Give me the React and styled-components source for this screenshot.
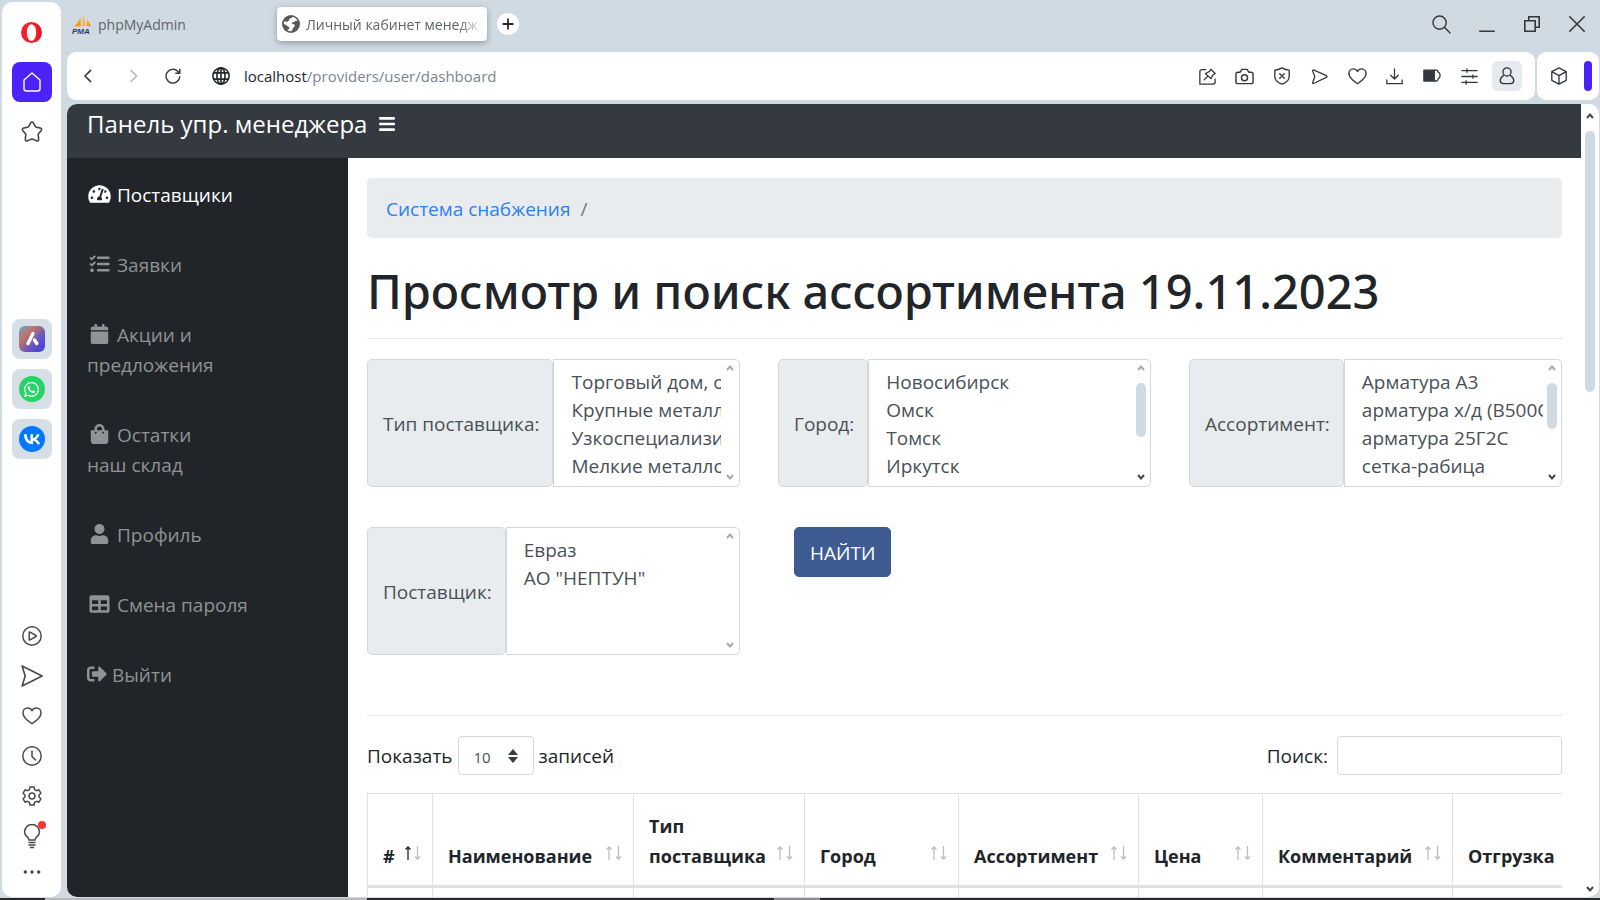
import styled, { createGlobalStyle } from 'styled-components';
import {
  FaBars,
  FaCalendar,
  FaShoppingBag,
  FaSignOutAlt,
  FaTable,
  FaTachometerAlt,
  FaTasks,
  FaUser,
  FaWhatsapp,
} from 'react-icons/fa';

const GlobalStyle = createGlobalStyle`
  * { box-sizing: border-box; }

  body {
    margin: 0;
    font-family: 'Open Sans', 'Noto Sans', sans-serif;
    font-size: 19px;
    line-height: 30px;
    color: #212529;
    overflow: hidden;
  }

  button, input, select { font-family: inherit; }
  a { text-decoration: none; }
`;

/* ---------- browser window ---------- */

const Desktop = styled.div`
  height: 100vh;
  display: flex;
  flex-direction: column;
  background: #d0dae3;
`;

const Taskbar = styled.div`
  flex: none;
  height: 2px;
  background: linear-gradient(
    90deg,
    #2a2a2e 45px, #b9b9bb 45px, #b9b9bb 367px,
    #2a2a2e 367px, #2a2a2e 774px, #8d8d90 774px,
    #8d8d90 820px, #2a2a2e 820px
  );
`;

const BrowserWindow = styled.div`
  flex: 1;
  min-height: 0;
  display: flex;
  gap: 6px;
  padding: 2px 1px 1px 2px;
`;

const BrowserSidebar = styled.aside`
  flex: none;
  width: 59px;
  display: flex;
  flex-direction: column;
  align-items: center;
  justify-content: space-between;
  padding: 10px 0 1px;
  background: #fff;
  border-radius: 10px;
`;

const SideGroup = styled.div`
  display: flex;
  flex-direction: column;
  align-items: center;
  gap: ${({ $gap }) => $gap || 0}px;
  padding-top: ${({ $top }) => $top || 0}px;
`;

const SideButton = styled.button`
  position: relative;
  display: flex;
  align-items: center;
  justify-content: center;
  width: 40px;
  height: 40px;
  padding: 0;
  border: 0;
  border-radius: 8px;
  color: #454b52;
  background: ${({ $bg }) => $bg || 'none'};
`;

const RedDot = styled.span`
  position: absolute;
  top: 5px;
  right: 6px;
  width: 8px;
  height: 8px;
  border-radius: 50%;
  background: #f8372f;
`;

const AppIcon = styled.span`
  display: flex;
  align-items: center;
  justify-content: center;
  width: 26px;
  height: 26px;
  border-radius: ${({ $round }) => ($round ? '50%' : '6px')};
  background: ${({ $bg }) => $bg};
  color: #fff;
`;

const WindowMain = styled.div`
  flex: 1;
  min-width: 0;
  display: flex;
  flex-direction: column;
`;

const TabStrip = styled.div`
  flex: none;
  display: flex;
  align-items: center;
  height: 50px;
  padding-bottom: 6px;
`;

const Tab = styled.button`
  display: flex;
  align-items: center;
  gap: 6px;
  flex: none;
  width: 210px;
  height: 34px;
  padding: 0 6px 0 5px;
  border: 0;
  border-radius: 4px;
  font-size: 14px;
  color: #5e646a;
  text-align: left;
  white-space: nowrap;
  background: ${({ $active }) => ($active ? '#fff' : 'none')};
  box-shadow: ${({ $active }) => ($active ? '0 2px 6px rgba(60, 75, 90, 0.45)' : 'none')};

  svg { flex: none; }
`;

const TabTitle = styled.span`
  mask-image: linear-gradient(90deg, #000 88%, transparent 104%);
`;

const NewTab = styled.button`
  display: flex;
  align-items: center;
  justify-content: center;
  width: 22px;
  height: 22px;
  margin-left: 10px;
  padding: 0;
  border: 0;
  border-radius: 50%;
  background: #fff;
  color: #23282d;
`;

const WindowControls = styled.div`
  display: flex;
  margin-left: auto;
`;

const WindowButton = styled.button`
  display: flex;
  align-items: center;
  justify-content: center;
  width: 45px;
  height: 40px;
  padding: 0;
  border: 0;
  background: none;
  color: #33383d;
`;

const Toolbar = styled.div`
  flex: none;
  display: flex;
  gap: 2px;
  height: 48px;
  margin-bottom: 4px;
`;

const ToolbarPanel = styled.div`
  display: flex;
  align-items: center;
  flex: ${({ $grow }) => ($grow ? 1 : 'none')};
  gap: 10px;
  padding: ${({ $grow }) => ($grow ? '0 13px 0 7px' : '0 7px')};
  background: #fff;
  border-radius: 9px;
`;

const NavButtons = styled.div`
  display: flex;
  gap: 12px;
`;

const ToolButton = styled.button`
  display: flex;
  align-items: center;
  justify-content: center;
  width: 30px;
  height: 30px;
  padding: 0;
  border: 0;
  border-radius: 6px;
  color: ${({ disabled }) => (disabled ? '#b8bcc0' : '#32383e')};
  background: ${({ $active }) => ($active ? '#e4eaf0' : 'none')};
`;

const Address = styled.div`
  display: flex;
  align-items: center;
  gap: 14px;
  flex: 1;
  padding-left: 14px;
  font-size: 15px;
  color: #7b858e;

  b { font-weight: 400; color: #23282d; }
  svg { color: #23282d; }
`;

const ToolIcons = styled.div`
  display: flex;
  justify-content: space-between;
  width: 330px;
`;

const PurpleBar = styled.span`
  width: 8px;
  height: 30px;
  border-radius: 4px;
  background: #4c22fb;
`;

/* ---------- page ---------- */

const Viewport = styled.div`
  flex: 1;
  min-height: 0;
  display: flex;
  background: #fff;
  border-radius: 10px;
  overflow: hidden;
`;

const Page = styled.div`
  flex: 1;
  min-width: 0;
  display: flex;
  flex-direction: column;
`;

const TopNav = styled.header`
  flex: none;
  display: flex;
  align-items: center;
  gap: 11px;
  height: 54px;
  padding: 0 20px 14px;
  background: #343a40;
`;

const Brand = styled.a`
  font-size: 24px;
  color: #fff;
`;

const MenuButton = styled.button`
  display: flex;
  padding: 0;
  border: 0;
  background: none;
  color: #fff;
  font-size: 18px;
`;

const PageBody = styled.div`
  flex: 1;
  min-height: 0;
  display: flex;
`;

const SideNav = styled.nav`
  flex: none;
  width: 281px;
  padding-top: 2px;
  background: #212529;
`;

const NavItem = styled.a`
  display: block;
  padding: 20px;
  color: ${({ $active }) => ($active ? '#fff' : '#909294')};

  svg {
    width: ${({ $narrow }) => ($narrow ? 20 : 25)}px;
    height: 20px;
    margin-right: 5px;
    vertical-align: -2px;
  }
`;

const Content = styled.main`
  flex: 1;
  min-width: 0;
  padding: 20px 19px 0;
  overflow: hidden;
`;

const Breadcrumb = styled.div`
  display: flex;
  gap: 10px;
  padding: 16px 19px 14px;
  border-radius: 5px;
  background: #e9ecef;
  color: #6c757d;

  a { color: #2a80f5; }
`;

const PageTitle = styled.h1`
  margin: 23px 0 17px;
  font-family: 'Noto Sans', 'Open Sans', sans-serif;
  font-size: 47px;
  line-height: 60px;
  font-weight: 500;
`;

const Divider = styled.hr`
  margin: 0 0 20px;
  border: 0;
  border-top: 1px solid #e5e5e5;
`;

const Filters = styled.form`
  display: grid;
  grid-template-columns: repeat(3, minmax(0, 1fr));
  gap: 40px 38px;
  margin-bottom: 60px;
`;

const InputGroup = styled.div`
  display: flex;
  height: 128px;
`;

const GroupLabel = styled.label`
  flex: none;
  display: flex;
  align-items: center;
  padding: 2px 13px 0 15px;
  border: 1px solid #d3d8dd;
  border-radius: 5px;
  background: #e9ecef;
  color: #495057;
`;

const ListFrame = styled.div`
  flex: 1;
  min-width: 0;
  display: flex;
  padding: 9px 0 5px 15px;
  border: 1px solid #d3d8dd;
  border-radius: 0 5px 5px 0;
`;

const ListSelect = styled.select`
  flex: 1;
  min-width: 0;
  height: 112px;
  padding: 0;
  border: 0;
  outline: 0;
  background: none;
  font-size: 19px;
  color: #495057;
  overflow: hidden;
  scrollbar-width: none;

  option {
    height: 28px;
    padding: 0 2px;
    line-height: 28px;
  }
`;

const ScrollTrack = styled.div`
  flex: none;
  display: flex;
  flex-direction: column;
  align-items: center;
  width: 18px;
  margin: -5px 0 0;
  color: #a6a9ac;

  svg:last-child {
    margin-top: auto;
    color: ${({ $enabled }) => ($enabled ? '#44484c' : '#a6a9ac')};
  }
`;

const ScrollThumb = styled.span`
  width: 10px;
  height: ${({ $size }) => $size}px;
  margin-top: 11px;
  border-radius: 5px;
  background: #d0dae3;
`;

const FindButton = styled.button`
  justify-self: start;
  height: 50px;
  margin-left: 16px;
  padding: 2px 15px 0;
  border: 1px solid #3c5a92;
  border-radius: 5px;
  background: #3f5c92;
  color: #fff;
  font-size: 19px;
`;

const TableTools = styled.div`
  display: flex;
  justify-content: space-between;
  height: 39px;
  margin-bottom: 18px;
`;

const ToolLabel = styled.label`
  display: flex;
  align-items: center;
  gap: ${({ $gap }) => $gap}px;
`;

const LengthBox = styled.span`
  position: relative;
  display: flex;
  width: 76px;
  height: 39px;

  svg {
    position: absolute;
    top: 13px;
    right: 16px;
    pointer-events: none;
  }
`;

const LengthSelect = styled.select`
  appearance: none;
  width: 100%;
  padding: 2px 15px 0;
  border: 1px solid #d3d8dd;
  border-radius: 4px;
  background: #fff;
  color: #495057;
  font-size: 15px;
`;

const SearchInput = styled.input`
  width: 225px;
  height: 39px;
  border: 1px solid #d3d8dd;
  border-radius: 4px;
  background: #fff;
`;

const TableScroll = styled.div`
  overflow: hidden;
`;

const DataTable = styled.table`
  table-layout: fixed;
  width: 1256px;
  border-collapse: collapse;

  th, td {
    border: 1px solid #dee2e6;
    vertical-align: bottom;
    text-align: left;
  }

  th {
    padding: 17px 11px 14px 15px;
    border-bottom: 3px solid #dee2e6;
    font-size: 18px;
    font-weight: 700;
  }

  td { height: 60px; }
`;

const HeadCell = styled.div`
  display: flex;
  align-items: flex-end;
  justify-content: space-between;

  svg { flex: none; margin-bottom: 11px; }
`;

const PageScroll = styled.div`
  flex: none;
  display: flex;
  flex-direction: column;
  align-items: center;
  width: 18px;
  padding: 8px 0 4px;
  color: #44484c;

  svg:last-child { margin-top: auto; }
`;

/* ---------- icons ---------- */

function Line({ size = 20, width = 1.5, children }) {
  return (
    <svg
      width={size}
      height={size}
      viewBox="0 0 20 20"
      fill="none"
      stroke="currentColor"
      strokeWidth={width}
      strokeLinecap="round"
      strokeLinejoin="round"
      aria-hidden="true"
    >
      {children}
    </svg>
  );
}

const heart = 'M10 17.6C8.5 16.5 1 12.2 1 6.9C1 4 3.1 2 5.6 2C7.5 2 9.2 3 10 4.7C10.8 3 12.5 2 14.4 2C16.9 2 19 4 19 6.9C19 12.2 11.5 16.5 10 17.6Z';

function OperaLogo() {
  return (
    <svg width="21" height="21" viewBox="0 0 21 21" aria-hidden="true">
      <path fill="#fa1e2d" fillRule="evenodd" d="M10.5 0a10.5 10.5 0 1 0 0 21a10.5 10.5 0 1 0 0-21ZM10.5 2.2c2.7 0 4.6 3.6 4.6 8.3s-1.9 8.3-4.6 8.3s-4.6-3.6-4.6-8.3s1.9-8.3 4.6-8.3Z" />
      <path fill="#b70f1d" d="M14 1.5c3.8 1.4 6.3 5 6.3 9s-2.5 7.6-6.3 9c2.2-2 3.4-5.3 3.4-9s-1.2-7-3.4-9Z" opacity=".35" />
    </svg>
  );
}

function PmaLogo() {
  return (
    <svg width="20" height="20" viewBox="0 0 20 20" aria-hidden="true">
      <path fill="#f89c0e" d="M8.6 3L8.8 12.3L1.5 12.6C4.5 10.5 7.2 7.5 8.6 3Z" />
      <path fill="#f6b45a" d="M11 0C12.3 4 13.8 8.5 13.5 12L9.8 12.3C10.8 8.5 11.2 4.5 11 0Z" />
      <path fill="#f89c0e" d="M14.8 4C15.5 7 18 10.5 19.5 12L14.5 12.2C15.3 9.5 15.3 6.5 14.8 4Z" />
      <text x="0" y="19.5" fontSize="8" fontWeight="700" fontStyle="italic" fontFamily="Liberation Sans, sans-serif" fill="#33366b">PMA</text>
    </svg>
  );
}

function GlobeIcon() {
  return (
    <svg width="18" height="18" viewBox="0 0 18 18" aria-hidden="true">
      <circle cx="9" cy="9" r="9" fill="#55595d" />
      <path
        fill="#fff"
        d="M10.5 1.7C12.8 2.2 14.7 3.7 15.7 5.9C14.5 5.5 13.3 5.6 12.6 6.5C11.8 7.6 10 7 9.6 8.1C9.3 9 11 8.8 12 9.3C13.3 10 13 11.5 11.8 12.2C10.7 12.9 10.8 14.5 9.5 16.3C7.8 16.4 6.3 15.9 5 15C6.3 14.8 7.3 14.2 7.4 13.1C7.5 11.7 5.7 11.7 4.6 10.6C3.7 9.7 2.7 9.4 1.7 9.3C1.7 8 2 6.9 2.5 5.9C3.5 6.8 5.2 7 6.2 6.2C7.3 5.4 6.8 4.2 8 3.6C9 3.2 10.2 2.9 10.5 1.7Z"
      />
    </svg>
  );
}

function Chevron({ down }) {
  return (
    <svg width="8" height="8" viewBox="0 0 8 8" fill="none" stroke="currentColor" strokeWidth="2" aria-hidden="true">
      <path d={down ? 'M1 2L4 5.5L7 2' : 'M1 6L4 2.5L7 6'} />
    </svg>
  );
}

function SortArrows({ asc }) {
  return (
    <svg width="16" height="14" viewBox="0 0 16 14" fill="none" stroke="#212529" strokeWidth="1.3" aria-hidden="true">
      <path d="M3 14V1M0.500 3.500L3 1L5.500 3.500" opacity={asc ? 1 : 0.3} />
      <path d="M12.5 0V13M10 10.5L12.5 13L15 10.5" opacity="0.3" />
    </svg>
  );
}

/* ---------- data ---------- */

const NAV = [
  { icon: FaTachometerAlt, text: 'Поставщики', active: true },
  { icon: FaTasks, text: 'Заявки' },
  { icon: FaCalendar, text: 'Акции и', second: 'предложения' },
  { icon: FaShoppingBag, text: 'Остатки', second: 'наш склад' },
  { icon: FaUser, text: 'Профиль' },
  { icon: FaTable, text: 'Смена пароля' },
  { icon: FaSignOutAlt, text: 'Выйти', narrow: true },
];

const COLUMNS = [
  { title: '#', width: 65, asc: true },
  { title: 'Наименование', width: 201 },
  { title: 'Тип поставщика', width: 171 },
  { title: 'Город', width: 154 },
  { title: 'Ассортимент', width: 180 },
  { title: 'Цена', width: 124 },
  { title: 'Комментарий', width: 190 },
  { title: 'Отгрузка', width: 171 },
];

function ListFilter({ id, label, options, thumb }) {
  return (
    <InputGroup>
      <GroupLabel htmlFor={id}>{label}</GroupLabel>
      <ListFrame>
        <ListSelect id={id} multiple size={4}>
          {options.map((o) => <option key={o}>{o}</option>)}
        </ListSelect>
        <ScrollTrack $enabled={Boolean(thumb)}>
          <Chevron />
          {thumb && <ScrollThumb $size={thumb} />}
          <Chevron down />
        </ScrollTrack>
      </ListFrame>
    </InputGroup>
  );
}

function BrowserSide() {
  return (
    <BrowserSidebar>
      <SideGroup $gap={10}>
        <SideButton aria-label="Opera"><OperaLogo /></SideButton>
        <SideButton $bg="#4c22fb" aria-label="Home">
          <Line size={20} width={1.4}>
            <g stroke="#fff"><path d="M10 1L18 8V16.5C18 18 17.2 19 15.7 19H4.3C2.8 19 2 18 2 16.5V8Z" /></g>
          </Line>
        </SideButton>
        <SideButton aria-label="Bookmarks">
          <Line size={22}>
            <path d="M8.8 1.7Q10 .2 11.2 1.7L13.4 5.5L17.8 6.5Q19.5 7.2 18.4 8.7L15.6 12.1L16.1 16.6Q16 18.6 14.1 17.9L10 16.3L5.9 17.9Q4 18.6 3.9 16.6L4.4 12.1L1.6 8.7Q.5 7.2 2.2 6.5L6.6 5.5Z" />
          </Line>
        </SideButton>
      </SideGroup>
      <SideGroup $gap={10} $top={10}>
        <SideButton $bg="#d6dfe6" aria-label="Aria">
          <AppIcon $bg="linear-gradient(135deg, #62a9c4 0%, #c27268 32%, #6355c8 65%, #3c3fd6 100%)">
            <svg width="18" height="18" viewBox="0 0 18 18" fill="none" stroke="#fff" strokeLinecap="round" strokeWidth="3.4">
              <path d="M10 3.5L5 13.5M11.5 10L13.8 13.5" />
            </svg>
          </AppIcon>
        </SideButton>
        <SideButton $bg="#d6dfe6" aria-label="WhatsApp">
          <AppIcon $round $bg="#25d366"><FaWhatsapp size={17} /></AppIcon>
        </SideButton>
        <SideButton $bg="#d6dfe6" aria-label="VK">
          <AppIcon $round $bg="#0077ff">
            <svg width="24" height="24" viewBox="0 0 48 48" fill="#fff">
              <path d="M25.54 34.58c-10.94 0-17.18-7.5-17.44-19.98h5.48c.18 9.16 4.22 13.04 7.42 13.84V14.6h5.16v7.9c3.16-.34 6.48-3.94 7.6-7.9h5.16c-.86 4.88-4.46 8.48-7.02 9.96 2.56 1.2 6.66 4.34 8.22 10.02h-5.68c-1.22-3.8-4.26-6.74-8.28-7.14v7.14z" />
            </svg>
          </AppIcon>
        </SideButton>
      </SideGroup>
      <SideGroup>
        <SideButton aria-label="Player">
          <Line><circle cx="10" cy="10" r="9.2" /><path d="M7.2 6.5Q7.2 5.8 8 6.2L14 9.5Q14.6 10 14 10.5L8 13.8Q7.2 14.2 7.2 13.5Z" /></Line>
        </SideButton>
        <SideButton aria-label="Messenger">
          <Line size={22}><path d="M1 1L19.2 10L1 19L3.8 10Z" /></Line>
        </SideButton>
        <SideButton aria-label="Favourites"><Line><path d={heart} /></Line></SideButton>
        <SideButton aria-label="History">
          <Line><circle cx="10" cy="10" r="9.2" /><path d="M10 5V10.5L13.5 14" /></Line>
        </SideButton>
        <SideButton aria-label="Settings">
          <Line>
            <path d="M8 1H12L12.5 3.6L14.4 4.7L16.9 3.8L18.9 7.2L17 9V11L18.9 12.8L16.9 16.2L14.4 15.3L12.5 16.4L12 19H8L7.5 16.4L5.6 15.3L3.1 16.2L1.1 12.8L3 11V9L1.1 7.2L3.1 3.8L5.6 4.7L7.5 3.6Z" />
            <circle cx="10" cy="10" r="3" />
          </Line>
        </SideButton>
        <SideButton aria-label="Tips">
          <svg width="18" height="25" viewBox="0 0 18 25" fill="none" stroke="currentColor" strokeWidth="1.5">
            <path d="M6 16C6 13 1.5 12 1.5 8A7.5 7.5 0 0 1 16.5 8C16.5 12 12 13 12 16ZM5.5 18.5H12.5M5.5 21H12.5M7 23.5H11" />
          </svg>
          <RedDot />
        </SideButton>
        <SideButton aria-label="More">
          <Line><g fill="currentColor" stroke="none"><circle cx="3.3" cy="6" r="1.7" /><circle cx="10" cy="6" r="1.7" /><circle cx="16.7" cy="6" r="1.7" /></g></Line>
        </SideButton>
      </SideGroup>
    </BrowserSidebar>
  );
}

function BrowserTop() {
  return (
    <>
      <TabStrip>
        <Tab><PmaLogo />phpMyAdmin</Tab>
        <Tab $active>
          <GlobeIcon />
          <TabTitle>Личный кабинет менедж</TabTitle>
        </Tab>
        <NewTab aria-label="New tab"><Line size={12} width={3}><path d="M10 2V18M2 10H18" /></Line></NewTab>
        <WindowControls>
          <WindowButton aria-label="Search tabs">
            <Line size={19}><circle cx="8" cy="8" r="7" /><path d="M13 13L19 19" /></Line>
          </WindowButton>
          <WindowButton aria-label="Minimize">
            <Line size={16} width={2}><path d="M1 19H19" /></Line>
          </WindowButton>
          <WindowButton aria-label="Restore">
            <Line size={16} width={2}><path d="M1 6H14V19H1ZM6 6V1H19V14H14" strokeLinejoin="miter" /></Line>
          </WindowButton>
          <WindowButton aria-label="Close">
            <Line size={16} width={2}><path d="M1 1L19 19M19 1L1 19" /></Line>
          </WindowButton>
        </WindowControls>
      </TabStrip>
      <Toolbar>
        <ToolbarPanel $grow>
          <NavButtons>
            <ToolButton aria-label="Back"><Line size={16} width={2}><path d="M12 3L5 10L12 17" /></Line></ToolButton>
            <ToolButton aria-label="Forward" disabled><Line size={16} width={2}><path d="M10 3L17 10L10 17" /></Line></ToolButton>
            <ToolButton aria-label="Reload">
              <Line size={16} width={1.8}><path d="M18.5 11A8.6 8.6 0 1 1 16 4.2L18.5 6.5M18.5 1.5V6.5H13.5" /></Line>
            </ToolButton>
          </NavButtons>
          <Address>
            <Line size={18} width={1.8}>
              <circle cx="10" cy="10" r="9" />
              <ellipse cx="10" cy="10" rx="4.5" ry="9" />
              <path d="M10 1V19M2 6.5H18M2 13.5H18" />
            </Line>
            <span><b>localhost</b>/providers/user/dashboard</span>
          </Address>
          <ToolIcons>
            <ToolButton aria-label="Pinboard">
              <Line size={17}><path d="M8 2H3.5Q1 2 1 4.5V19H16.5Q19 19 19 16.5V13M14 1.5L19 6.5L16.5 8L14 12.5L7.5 6.5L12.5 4ZM10.5 9.5L6 14" /></Line>
            </ToolButton>
            <ToolButton aria-label="Snapshot">
              <Line size={19}><path d="M3 5.5H5.5L7.3 2.5H12.7L14.5 5.5H17Q19 5.5 19 7.5V15.5Q19 17.5 17 17.5H3Q1 17.5 1 15.5V7.5Q1 5.5 3 5.5Z" /><circle cx="10" cy="11.3" r="3.2" /></Line>
            </ToolButton>
            <ToolButton aria-label="Shield">
              <Line size={18}><path d="M10 1Q14 3.5 18 3.5V10.5Q18 16 10 19Q2 16 2 10.5V3.5Q6 3.5 10 1ZM7.5 7.5L12.5 12.5M12.5 7.5L7.5 12.5" /></Line>
            </ToolButton>
            <ToolButton aria-label="Send">
              <Line size={17}><path d="M3 2.2L18 9Q19.5 10 18 11L3 18.2Q1.5 18.5 2 17L4.5 10L1.8 3.5Q1.5 2 3 2.2Z" /></Line>
            </ToolButton>
            <ToolButton aria-label="Favourite"><Line size={19}><path d={heart} /></Line></ToolButton>
            <ToolButton aria-label="Downloads">
              <Line size={17}><path d="M10 1V12.5M5.5 8.5L10 13L14.5 8.5M1 14V18.5H19V14" /></Line>
            </ToolButton>
            <ToolButton aria-label="Battery">
              <Line size={18} width={1.5}>
                <path d="M1 3.5H12.5V15.5H1Z" fill="currentColor" />
                <path d="M12.5 3.5H15Q16.500 3.500 16.500 5.500Q19 6.500 19 9.500Q19 12.500 16.500 13.500Q16.500 15.500 15 15.500H12.500" />
              </Line>
            </ToolButton>
            <ToolButton aria-label="Easy setup">
              <Line size={17}><path d="M1 3H19M1 10H19M1 17H19M7 1V5M14 8V12M6 15V19" /></Line>
            </ToolButton>
            <ToolButton aria-label="Profile" $active>
              <Line size={18}><circle cx="10" cy="5.5" r="4.5" /><path d="M6 9.5C3.5 11 2.5 13 2.5 15Q2.5 18.5 6 18.5H14Q17.5 18.5 17.5 15C17.5 13 16.5 11 14 9.5" /></Line>
            </ToolButton>
          </ToolIcons>
        </ToolbarPanel>
        <ToolbarPanel>
          <ToolButton aria-label="Extensions">
            <Line size={18}><path d="M10 1L18 5.2V14.8L10 19L2 14.8V5.2ZM2 5.2L10 9.5L18 5.2M10 9.5V19" /></Line>
          </ToolButton>
          <PurpleBar />
        </ToolbarPanel>
      </Toolbar>
    </>
  );
}

function App() {
  return (
    <Desktop>
      <GlobalStyle />
      <BrowserWindow>
        <BrowserSide />
        <WindowMain>
          <BrowserTop />
          <Viewport>
            <Page>
              <TopNav>
                <Brand href="#">Панель упр. менеджера</Brand>
                <MenuButton aria-label="Меню"><FaBars /></MenuButton>
              </TopNav>
              <PageBody>
                <SideNav>
                  {NAV.map(({ icon: Icon, text, second, active, narrow }) => (
                    <NavItem key={text} href="#" $active={active} $narrow={narrow}>
                      <Icon />{text}
                      {second && <><br />{second}</>}
                    </NavItem>
                  ))}
                </SideNav>
                <Content>
                  <Breadcrumb>
                    <a href="#">Система снабжения</a>
                    <span>/</span>
                  </Breadcrumb>
                  <PageTitle>Просмотр и поиск ассортимента 19.11.2023</PageTitle>
                  <Divider />
                  <Filters onSubmit={(e) => e.preventDefault()}>
                    <ListFilter
                      id="type"
                      label="Тип поставщика:"
                      options={['Торговый дом, оптовик', 'Крупные металлобазы', 'Узкоспециализированные', 'Мелкие металлобазы']}
                    />
                    <ListFilter
                      id="city"
                      label="Город:"
                      options={['Новосибирск', 'Омск', 'Томск', 'Иркутск']}
                      thumb={54}
                    />
                    <ListFilter
                      id="goods"
                      label="Ассортимент:"
                      options={['Арматура А3', 'арматура х/д (В500С)', 'арматура 25Г2С', 'сетка-рабица']}
                      thumb={46}
                    />
                    <ListFilter id="provider" label="Поставщик:" options={['Евраз', 'АО "НЕПТУН"']} />
                    <FindButton type="submit">НАЙТИ</FindButton>
                  </Filters>
                  <Divider />
                  <TableTools>
                    <ToolLabel $gap={5}>
                      Показать
                      <LengthBox>
                        <LengthSelect defaultValue="10">
                          <option>10</option>
                          <option>25</option>
                          <option>50</option>
                        </LengthSelect>
                        <svg width="10" height="14" viewBox="0 0 10 14" fill="#343a40" aria-hidden="true">
                          <path d="M0 6L5 0L10 6ZM0 8L5 14L10 8Z" />
                        </svg>
                      </LengthBox>
                      записей
                    </ToolLabel>
                    <ToolLabel $gap={9}>
                      Поиск:
                      <SearchInput type="search" />
                    </ToolLabel>
                  </TableTools>
                  <TableScroll>
                    <DataTable>
                      <colgroup>
                        {COLUMNS.map((c) => <col key={c.title} style={{ width: c.width }} />)}
                      </colgroup>
                      <thead>
                        <tr>
                          {COLUMNS.map((c) => (
                            <th key={c.title}>
                              <HeadCell>{c.title}<SortArrows asc={c.asc} /></HeadCell>
                            </th>
                          ))}
                        </tr>
                      </thead>
                      <tbody>
                        <tr>{COLUMNS.map((c) => <td key={c.title} />)}</tr>
                      </tbody>
                    </DataTable>
                  </TableScroll>
                </Content>
              </PageBody>
            </Page>
            <PageScroll>
              <Chevron />
              <ScrollThumb $size={261} />
              <Chevron down />
            </PageScroll>
          </Viewport>
        </WindowMain>
      </BrowserWindow>
      <Taskbar />
    </Desktop>
  );
}

export default App;
